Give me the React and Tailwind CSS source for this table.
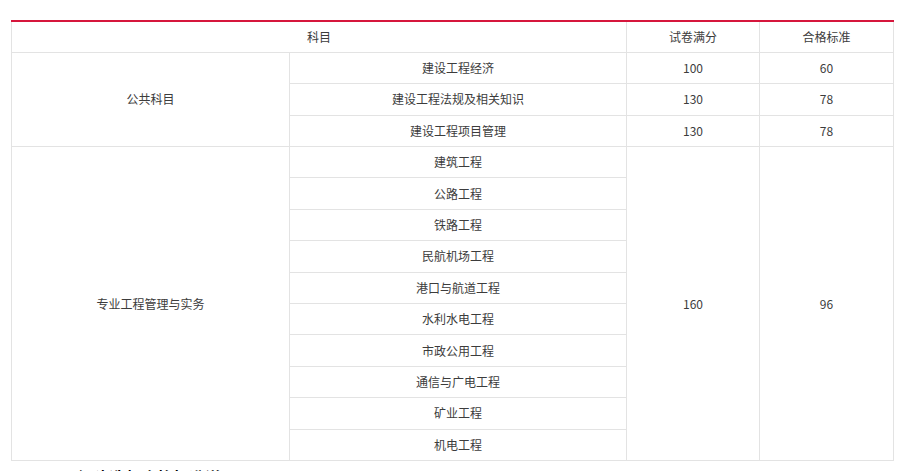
const rows = [
  "建筑工程",
  "公路工程",
  "铁路工程",
  "民航机场工程",
  "港口与航道工程",
  "水利水电工程",
  "市政公用工程",
  "通信与广电工程",
  "矿业工程",
  "机电工程",
];

const cell = "border border-[#e3e3e3] text-center align-middle h-[31.4px] p-0";

const App = () => {
  return (
    <div
      className="bg-white w-[909px] h-[471px] overflow-hidden pt-[20px] pl-[11px] text-[12px] text-[#3c3c3c]"
      style={{ fontFamily: '"Microsoft YaHei", "Noto Sans CJK SC", sans-serif' }}
    >
      <table className="w-[882px] border-collapse border-t-2 border-t-[#d6163c] table-fixed">
        <colgroup>
          <col className="w-[278px]" />
          <col className="w-[337px]" />
          <col className="w-[133px]" />
          <col className="w-[134px]" />
        </colgroup>
        <tbody>
          <tr>
            <td colSpan={2} className={cell + " border-t-[#d6163c]"}>科目</td>
            <td className={cell + " border-t-[#d6163c]"}>试卷满分</td>
            <td className={cell + " border-t-[#d6163c]"}>合格标准</td>
          </tr>
          <tr>
            <td rowSpan={3} className={cell}>公共科目</td>
            <td className={cell}>建设工程经济</td>
            <td className={cell}>100</td>
            <td className={cell}>60</td>
          </tr>
          <tr>
            <td className={cell}>建设工程法规及相关知识</td>
            <td className={cell}>130</td>
            <td className={cell}>78</td>
          </tr>
          <tr>
            <td className={cell}>建设工程项目管理</td>
            <td className={cell}>130</td>
            <td className={cell}>78</td>
          </tr>
          {rows.map((name, i) => (
            <tr key={name}>
              {i === 0 && (
                <td rowSpan={10} className={cell}>专业工程管理与实务</td>
              )}
              <td className={cell}>{name}</td>
              {i === 0 && (
                <td rowSpan={10} className={cell}>160</td>
              )}
              {i === 0 && (
                <td rowSpan={10} className={cell}>96</td>
              )}
            </tr>
          ))}
        </tbody>
      </table>
      <p className="mt-[4px] pl-[50px] text-[16px] font-bold text-black leading-[24px]">
        二级建造师合格标准说明
      </p>
    </div>
  );
};

export default App;
